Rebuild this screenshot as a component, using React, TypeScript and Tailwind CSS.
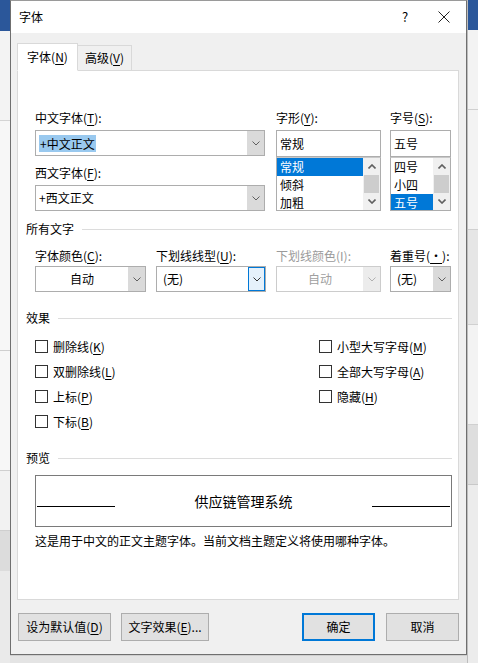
import React from 'react';

// Small chevron used by combo boxes and list scrollbars
const Chevron: React.FC<{ up?: boolean; color?: string; bold?: boolean }> = ({ up, color = '#606060', bold }) => (
    <svg width="8" height="5" viewBox="0 0 8 5" className="block">
        <path
            d={up ? 'M0.5 4.5 L4 1 L7.5 4.5' : 'M0.5 0.5 L4 4 L7.5 0.5'}
            fill="none"
            stroke={color}
            strokeWidth={bold ? 1.6 : 1}
        />
    </svg>
);

const Acc: React.FC<{ children: React.ReactNode }> = ({ children }) => (
    <span className="underline underline-offset-[2px] decoration-[1px]">{children}</span>
);

interface ComboProps {
    text: React.ReactNode;
    center?: boolean;
    disabled?: boolean;
    focused?: boolean;
}

const Combo: React.FC<ComboProps> = ({ text, center, disabled, focused }) => (
    <div
        className={`flex h-[26px] w-full border bg-white ${disabled ? 'border-[#cccccc]' : 'border-[#adadad]'}`}
    >
        <div
            className={`flex flex-1 items-center px-[6px] ${center ? 'justify-center' : ''} ${disabled ? 'text-[#a0a0a0]' : ''}`}
        >
            {text}
        </div>
        <div
            className={`flex w-[17px] items-center justify-center ${
                focused
                    ? 'border border-[#0078d7] bg-[#e5f1fb]'
                    : disabled
                      ? 'bg-[#ececec]'
                      : 'bg-[#dadada]'
            }`}
        >
            <Chevron color={disabled ? '#b0b0b0' : focused ? '#333' : '#606060'} />
        </div>
    </div>
);

const ListBox: React.FC<{ items: string[]; selected: number }> = ({ items, selected }) => (
    <div className="flex h-[54px] w-full border border-[#adadad] border-t-[#c8c8c8] bg-white overflow-hidden">
        <div className="flex-1 flex flex-col">
            {items.map((it, i) => (
                <div
                    key={it}
                    className={`h-[18px] leading-[18px] pl-[3px] ${i === selected ? 'bg-[#0078d7] text-white' : ''}`}
                >
                    {it}
                </div>
            ))}
        </div>
        <div className="w-[17px] flex flex-col bg-[#f0f0f0]">
            <div className="h-[17px] flex items-center justify-center">
                <Chevron up bold />
            </div>
            <div className="h-[18px] mx-[1px] bg-[#cdcdcd]" />
            <div className="flex-1 flex items-center justify-center">
                <Chevron bold />
            </div>
        </div>
    </div>
);

const Label: React.FC<{ children: React.ReactNode; gray?: boolean }> = ({ children, gray }) => (
    <div className={`h-[16px] leading-[16px] whitespace-nowrap ${gray ? 'text-[#9a9a9a]' : ''}`}>{children}</div>
);

const Heading: React.FC<{ children: React.ReactNode; className?: string }> = ({ children, className }) => (
    <div className={`flex items-center h-[16px] ${className ?? ''}`}>
        <span className="leading-[16px]">{children}</span>
        <div className="ml-[8px] flex-1 h-px bg-[#dcdcdc]" />
    </div>
);

const Check: React.FC<{ label: React.ReactNode }> = ({ label }) => (
    <div className="flex items-center h-[25px]">
        <div className="w-[13px] h-[13px] border border-[#333] bg-white" />
        <span className="ml-[5px] leading-[16px]">{label}</span>
    </div>
);

const Btn: React.FC<{ children: React.ReactNode; w: string; primary?: boolean }> = ({ children, w, primary }) => (
    <div
        className={`${w} h-[28px] flex items-center justify-center bg-[#e1e1e1] ${
            primary ? 'border-2 border-[#0078d7]' : 'border border-[#adadad]'
        }`}
    >
        {children}
    </div>
);

export default function App() {
    return (
        <div className="flex w-[478px] h-[663px] overflow-hidden bg-[#e9e9e9] text-[12px] text-black font-['Microsoft_YaHei','Noto_Sans_CJK_SC',sans-serif]">
            {/* Word window peeking out on the left */}
            <div className="w-[10px] flex flex-col overflow-hidden">
                <div className="h-[31px] bg-[#2b579a]" />
                <div className="h-[90px] bg-[#f3f3f3] border-b border-[#d4d4d4]" />
                <div className="h-[230px] bg-[#f7f7f7] border-b border-[#cfcfcf]" />
                <div className="h-[80px] bg-[#f7f7f7]" />
                <div className="h-[40px] bg-[#f7f7f7] border-b border-[#cfcfcf]" />
                <div className="h-[60px] bg-[#f2f2f2] border-b border-[#cfcfcf]" />
                <div className="h-[40px] bg-[#dcdcdc]" />
                <div className="flex-1 bg-[#eaeaea]" />
            </div>

            <div className="w-[457px] flex flex-col">
                {/* Dialog */}
                <div className="h-[655px] flex flex-col border border-[#6f6f6f] border-t-[#9a9a9a]">
                    <div className="h-[32px] bg-white flex items-center pl-[8px]">
                        <span className="flex-1">字体</span>
                        <span className="w-[20px] text-center text-[13px] mr-[23px]">?</span>
                        <svg width="12" height="12" viewBox="0 0 12 12" className="mr-[16px]">
                            <path d="M0.5 0.5 L11.5 11.5 M11.5 0.5 L0.5 11.5" stroke="#222" strokeWidth="1" />
                        </svg>
                    </div>

                    <div className="flex-1 bg-[#f0f0f0] pt-[10px] pl-[6px] pr-[7px] flex flex-col">
                        {/* Tabs */}
                        <div className="flex items-end h-[27px] relative z-10">
                            <div className="h-[28px] -mb-px w-[61px] bg-white border border-[#d9d9d9] border-b-white flex items-center justify-center">
                                字体(<Acc>N</Acc>)
                            </div>
                            <div className="h-[25px] w-[54px] bg-[#f0f0f0] border border-l-0 border-b-0 border-[#d9d9d9] flex items-center justify-center">
                                高级(<Acc>V</Acc>)
                            </div>
                        </div>

                        {/* Tab panel */}
                        <div className="h-[530px] bg-white border border-[#d9d9d9] pl-[8px] pr-[6px] pt-[39px]">
                            <div className="flex ml-[9px]">
                                <div className="w-[230px] flex flex-col">
                                    <Label>中文字体(<Acc>T</Acc>):</Label>
                                    <div className="mt-[4px]">
                                        <Combo
                                            text={<span className="bg-[#99c9ef] px-[1px] -ml-[3px] leading-[17px]">+中文正文</span>}
                                        />
                                    </div>
                                    <div className="mt-[9px]">
                                        <Label>西文字体(<Acc>F</Acc>):</Label>
                                    </div>
                                    <div className="mt-[4px]">
                                        <Combo text={<span className="-ml-[3px]">+西文正文</span>} />
                                    </div>
                                </div>
                                <div className="w-[105px] ml-[11px] flex flex-col">
                                    <Label>字形(<Acc>Y</Acc>):</Label>
                                    <div className="mt-[4px] h-[27px] border border-[#adadad] flex items-center pl-[3px]">常规</div>
                                    <ListBox items={['常规', '倾斜', '加粗']} selected={0} />
                                </div>
                                <div className="w-[61px] ml-[9px] flex flex-col">
                                    <Label>字号(<Acc>S</Acc>):</Label>
                                    <div className="mt-[4px] h-[27px] border border-[#adadad] flex items-center pl-[3px]">五号</div>
                                    <ListBox items={['四号', '小四', '五号']} selected={2} />
                                </div>
                            </div>

                            <Heading className="mt-[10px]">所有文字</Heading>
                            <div className="flex ml-[9px] mt-[11px]">
                                <div className="w-[111px] flex flex-col">
                                    <Label>字体颜色(<Acc>C</Acc>):</Label>
                                    <div className="mt-[2px]">
                                        <Combo text="自动" center />
                                    </div>
                                </div>
                                <div className="w-[110px] ml-[10px] flex flex-col">
                                    <Label>下划线线型(<Acc>U</Acc>):</Label>
                                    <div className="mt-[2px]">
                                        <Combo text="(无)" focused />
                                    </div>
                                </div>
                                <div className="w-[105px] ml-[10px] flex flex-col">
                                    <Label gray>下划线颜色(I):</Label>
                                    <div className="mt-[2px]">
                                        <Combo text="自动" center disabled />
                                    </div>
                                </div>
                                <div className="w-[61px] ml-[9px] flex flex-col">
                                    <Label>着重号(<Acc>·</Acc>):</Label>
                                    <div className="mt-[2px]">
                                        <Combo text="(无)" />
                                    </div>
                                </div>
                            </div>

                            <Heading className="mt-[18px]">效果</Heading>
                            <div className="flex ml-[9px] mt-[8px]">
                                <div className="w-[284px] flex flex-col">
                                    <Check label={<>删除线(<Acc>K</Acc>)</>} />
                                    <Check label={<>双删除线(<Acc>L</Acc>)</>} />
                                    <Check label={<>上标(<Acc>P</Acc>)</>} />
                                    <Check label={<>下标(<Acc>B</Acc>)</>} />
                                </div>
                                <div className="flex flex-col">
                                    <Check label={<>小型大写字母(<Acc>M</Acc>)</>} />
                                    <Check label={<>全部大写字母(<Acc>A</Acc>)</>} />
                                    <Check label={<>隐藏(<Acc>H</Acc>)</>} />
                                </div>
                            </div>

                            <Heading className="mt-[16px]">预览</Heading>
                            <div className="ml-[9px] mt-[9px] h-[52px] border border-[#7a7a7a] bg-white flex items-center">
                                <div className="ml-[1px] mt-[10px] w-[78px] h-px bg-black" />
                                <div className="flex-1 text-center text-[14px] leading-[20px]">供应链管理系统</div>
                                <div className="mr-[1px] mt-[10px] w-[78px] h-px bg-black" />
                            </div>
                            <div className="ml-[9px] mt-[6px] h-[16px] leading-[16px] whitespace-nowrap">
                                这是用于中文的正文主题字体。当前文档主题定义将使用哪种字体。
                            </div>
                        </div>

                        {/* Buttons */}
                        <div className="flex mt-[13px]">
                            <div className="ml-[1px]">
                                <Btn w="w-[93px]">
                                    设为默认值(<Acc>D</Acc>)
                                </Btn>
                            </div>
                            <div className="ml-[10px]">
                                <Btn w="w-[88px]">
                                    文字效果(<Acc>E</Acc>)...
                                </Btn>
                            </div>
                            <div className="flex-1" />
                            <Btn w="w-[73px]" primary>
                                确定
                            </Btn>
                            <div className="ml-[11px]">
                                <Btn w="w-[73px]">取消</Btn>
                            </div>
                        </div>
                    </div>
                </div>
                <div className="flex-1 bg-[#e4e4e4] border-t border-[#cfcfcf]" />
            </div>

            {/* Word window on the right */}
            <div className="w-[11px] flex flex-col border-l border-[#bdbdbd]">
                <div className="h-[30px] bg-[#2b579a]" />
                <div className="h-[80px] bg-[#f3f3f3] border-b border-[#d0d0d0]" />
                <div className="h-[120px] bg-[#f3f3f3] border-b border-[#d0d0d0]" />
                <div className="h-[95px] bg-[#e6e6e6] border-b border-[#d0d0d0]" />
                <div className="h-[100px] bg-[#f3f3f3] border-b border-[#d0d0d0]" />
                <div className="h-[60px] bg-[#dedede] border-b border-[#c8c8c8]" />
                <div className="flex-1 bg-[#ececec]" />
            </div>
        </div>
    );
}
